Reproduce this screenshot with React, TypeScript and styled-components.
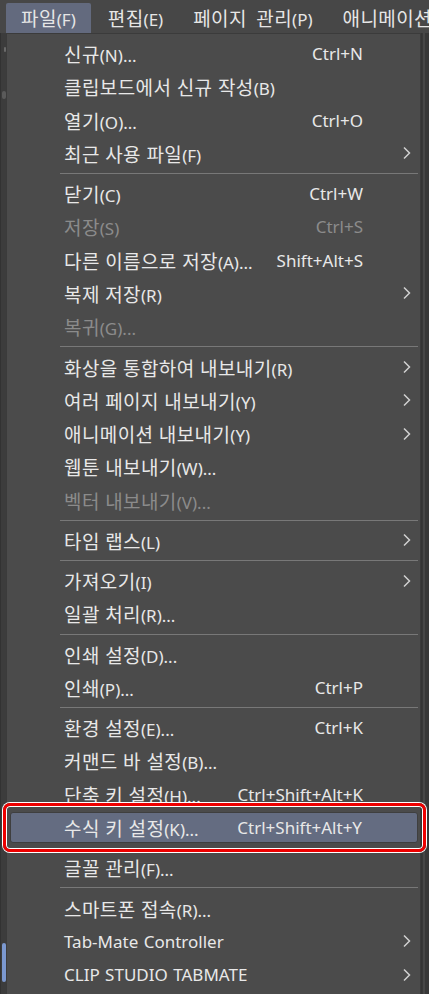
import React from 'react'
import styled, { createGlobalStyle, css } from 'styled-components'

const GlobalStyle = createGlobalStyle`
  html, body {
    margin: 0;
    padding: 0;
    background: #3a3a3a;
    overflow: hidden;
  }
  body {
    font-family: "Noto Sans", "Noto Sans CJK KR", sans-serif;
    -webkit-font-smoothing: antialiased;
  }
`

const Screen = styled.div`
  width: 429px;
  height: 994px;
  display: flex;
  flex-direction: column;
  overflow: hidden;
  background: #3a3a3a;
`

const MenuBar = styled.div`
  height: 33px;
  flex-shrink: 0;
  display: flex;
  align-items: flex-end;
  background: #474747;
  padding-left: 6px;
  white-space: nowrap;
  overflow: hidden;
`

const BarItem = styled.div<{ open?: boolean }>(
  ({ open }) => css`
    height: 30px;
    flex-shrink: 0;
    display: flex;
    align-items: center;
    padding: 0 15px 2px;
    margin-right: ${open ? 2 : 0}px;
    font-size: 17px;
    word-spacing: 5px;
    color: #e6e6e6;
    border-radius: 2px 2px 0 0;
    background: ${open ? '#636a7e' : 'transparent'};
    box-sizing: border-box;
  `,
)

// Hangul runs are set a little larger so their advance matches the reference
const Hangul = styled.span`
  font-family: "Noto Sans CJK KR", sans-serif;
  font-size: 19px;
  letter-spacing: 0.4px;
`

const Body = styled.div`
  flex: 1;
  display: flex;
  min-height: 0;
`

const LeftStrip = styled.div`
  width: 6px;
  flex-shrink: 0;
  background: #3c3c3c;
  border-left: 1px solid #323232;
  box-sizing: border-box;
  display: flex;
  flex-direction: column;
  align-items: flex-end;
  padding-top: 14px;
`

const StripMark = styled.div<{ h: number; top: number; tone: string; w?: number }>(
  ({ h, top, tone, w = 3 }) => css`
    width: ${w}px;
    height: ${h}px;
    margin-top: ${top}px;
    background: ${tone};
    border-radius: ${w}px;
  `,
)

const RightStrip = styled.div`
  width: 8px;
  flex-shrink: 0;
  background: #383838;
  border-left: 1px solid #353535;
  box-sizing: border-box;
`

const RightLine = styled.div`
  width: 2px;
  height: 100%;
  margin-left: 1px;
  background: #474747;
`

const Panel = styled.div`
  flex: 1;
  background: #4b4b4b;
  border: 1px solid #3b3b3b;
  border-bottom: none;
  padding-top: 3px;
  display: flex;
  flex-direction: column;
  min-width: 0;
`

const Row = styled.div<{ active?: boolean; disabled?: boolean }>(
  ({ active, disabled }) => css`
    position: relative;
    height: 33.27px;
    flex-shrink: 0;
    display: flex;
    align-items: center;
    padding-left: 57px;
    font-size: 17px;
    color: ${disabled ? '#8b8b8b' : '#e8e8e8'};
    white-space: nowrap;
    box-sizing: border-box;
    ${active &&
    css`
      height: 31.27px;
      margin: 1px 2px 8px 3px;
      padding-left: 53px;
      background: #646c81;
      border: 1px solid #3f3f3f;
      border-radius: 3px;
    `}
  `,
)

const Label = styled.span`
  flex: 1;
  word-spacing: 1px;
`

const Shortcut = styled.span``

const ArrowSlot = styled.span<{ active?: boolean }>(
  ({ active }) => css`
    width: ${active ? 55 : 57}px;
    flex-shrink: 0;
    display: flex;
    justify-content: flex-end;
    padding-right: 9px;
    box-sizing: border-box;
  `,
)

const Separator = styled.div`
  height: 7px;
  flex-shrink: 0;
  display: flex;
  align-items: center;
  padding: 0 2px 0 53px;
  &::after {
    content: '';
    flex: 1;
    height: 1px;
    background: #787878;
  }
`

const Annotation = styled.div`
  position: absolute;
  top: -10px;
  bottom: -10px;
  left: -8px;
  right: -9px;
  border: 3px solid #ee0000;
  border-radius: 7px;
  box-shadow: 0 0 0 1px #ffffff, inset 0 0 0 1px #ffffff;
  pointer-events: none;
`

const Chevron = () => (
  <svg width="8" height="14" viewBox="0 0 8 14">
    <polyline points="1,1.5 6.5,7 1,12.5" fill="none" stroke="#d0d0d0" strokeWidth="1.5" />
  </svg>
)

const Text: React.FC<{ value: string }> = ({ value }) => (
  <span>
    {value.split(/([\uAC00-\uD7A3]+)/).map((part, i) =>
      /[\uAC00-\uD7A3]/.test(part) ? <Hangul key={i}>{part}</Hangul> : part,
    )}
  </span>
)

type Entry =
  | { sep: true }
  | { sep?: false; label: string; shortcut?: string; sub?: boolean; disabled?: boolean; active?: boolean }

const entries: Entry[] = [
  { label: '신규(N)...', shortcut: 'Ctrl+N' },
  { label: '클립보드에서 신규 작성(B)' },
  { label: '열기(O)...', shortcut: 'Ctrl+O' },
  { label: '최근 사용 파일(F)', sub: true },
  { sep: true },
  { label: '닫기(C)', shortcut: 'Ctrl+W' },
  { label: '저장(S)', shortcut: 'Ctrl+S', disabled: true },
  { label: '다른 이름으로 저장(A)...', shortcut: 'Shift+Alt+S' },
  { label: '복제 저장(R)', sub: true },
  { label: '복귀(G)...', disabled: true },
  { sep: true },
  { label: '화상을 통합하여 내보내기(R)', sub: true },
  { label: '여러 페이지 내보내기(Y)', sub: true },
  { label: '애니메이션 내보내기(Y)', sub: true },
  { label: '웹툰 내보내기(W)...' },
  { label: '벡터 내보내기(V)...', disabled: true },
  { sep: true },
  { label: '타임 랩스(L)', sub: true },
  { sep: true },
  { label: '가져오기(I)', sub: true },
  { label: '일괄 처리(R)...' },
  { sep: true },
  { label: '인쇄 설정(D)...' },
  { label: '인쇄(P)...', shortcut: 'Ctrl+P' },
  { sep: true },
  { label: '환경 설정(E)...', shortcut: 'Ctrl+K' },
  { label: '커맨드 바 설정(B)...' },
  { label: '단축 키 설정(H)...', shortcut: 'Ctrl+Shift+Alt+K' },
  { label: '수식 키 설정(K)...', shortcut: 'Ctrl+Shift+Alt+Y', active: true },
  { label: '글꼴 관리(F)...' },
  { sep: true },
  { label: '스마트폰 접속(R)...' },
  { label: 'Tab-Mate Controller', sub: true },
  { label: 'CLIP STUDIO TABMATE', sub: true },
]

const menus = ['파일(F)', '편집(E)', '페이지 관리(P)', '애니메이션(A)']

export default function App() {
  return (
    <Screen>
      <GlobalStyle />
      <MenuBar>
        {menus.map((m, i) => (
          <BarItem key={m} open={i === 0}>
            <Text value={m} />
          </BarItem>
        ))}
      </MenuBar>
      <Body>
        <LeftStrip>
          <StripMark h={5} top={0} tone="#6a6a6a" w={2} />
          <StripMark h={8} top={39} tone="#5a5a5a" w={4} />
          <StripMark h={39} top={844} tone="#7b98cf" w={4} />
        </LeftStrip>
        <Panel>
          {entries.map((e, i) =>
            e.sep ? (
              <Separator key={i} />
            ) : (
              <Row key={i} active={e.active} disabled={e.disabled}>
                <Label>
                  <Text value={e.label} />
                </Label>
                {e.shortcut && <Shortcut>{e.shortcut}</Shortcut>}
                <ArrowSlot active={e.active}>{e.sub && <Chevron />}</ArrowSlot>
                {e.active && <Annotation />}
              </Row>
            ),
          )}
        </Panel>
        <RightStrip>
          <RightLine />
        </RightStrip>
      </Body>
    </Screen>
  )
}
